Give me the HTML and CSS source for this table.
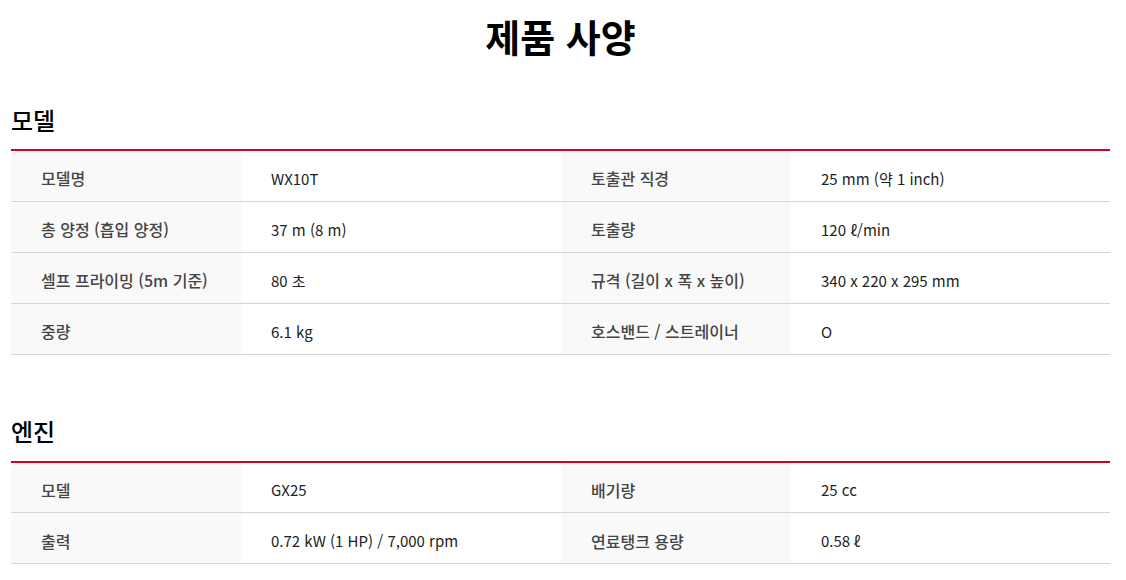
FILE: index.html
```html
<!DOCTYPE html>
<html lang="ko">
<head>
<meta charset="utf-8">
<link rel="stylesheet" href="styles.css">
</head>
<body>
<div class="page">
  <h1 class="title">제품 사양</h1>

  <section class="spec">
    <h2 class="spec-title">모델</h2>
    <table class="spec-table">
      <colgroup><col class="c-label"><col class="c-value"><col class="c-label"><col class="c-value2"></colgroup>
      <tr><th>모델명</th><td>WX10T</td><th>토출관 직경</th><td>25 mm (약 1 inch)</td></tr>
      <tr><th>총 양정 (흡입 양정)</th><td>37 m (8 m)</td><th>토출량</th><td>120 ℓ/min</td></tr>
      <tr><th>셀프 프라이밍 (5m 기준)</th><td>80 초</td><th>규격 (길이 x 폭 x 높이)</th><td>340 x 220 x 295 mm</td></tr>
      <tr><th>중량</th><td>6.1 kg</td><th>호스밴드 / 스트레이너</th><td>O</td></tr>
    </table>
  </section>

  <section class="spec spec-engine">
    <h2 class="spec-title">엔진</h2>
    <table class="spec-table">
      <colgroup><col class="c-label"><col class="c-value"><col class="c-label"><col class="c-value2"></colgroup>
      <tr><th>모델</th><td>GX25</td><th>배기량</th><td>25 cc</td></tr>
      <tr><th>출력</th><td>0.72 kW (1 HP) / 7,000 rpm</td><th>연료탱크 용량</th><td>0.58 ℓ</td></tr>
    </table>
  </section>
</div>
</body>
</html>
```

FILE: styles.css
```css
* { box-sizing: border-box; }
html, body { margin: 0; padding: 0; background: #fff; }
body {
  font-family: "Noto Sans CJK KR", "Noto Sans", sans-serif;
  color: #222;
}
.page {
  padding: 0 16px 0 11px;
}
.title {
  margin: 0;
  padding-top: 9px;
  text-align: center;
  font-size: 38px;
  line-height: 54px;
  font-weight: 700;
  color: #000;
}
.spec { margin-top: 39px; }
.spec-engine { margin-top: 58px; }
.spec-title {
  margin: 0 0 12px;
  font-size: 24px;
  line-height: 35px;
  font-weight: 500;
  color: #000;
}
.spec-engine .spec-title { margin-bottom: 13px; }
.spec-table {
  width: 100%;
  border-collapse: collapse;
  table-layout: fixed;
  border-top: 2px solid #d7001e;
}
.c-label { width: 230px; }
.c-value { width: 320px; }
.spec-table th,
.spec-table td {
  height: 51px;
  padding: 5px 30px 0;
  text-align: left;
  font-size: 15px;
  border-bottom: 1px solid #d4d4d4;
  vertical-align: middle;
}
.spec-table th {
  background: #f9f9f9;
  font-size: 16px;
  font-weight: 500;
  color: #444;
}
.spec-table td {
  font-weight: 400;
  color: #222;
}
```
